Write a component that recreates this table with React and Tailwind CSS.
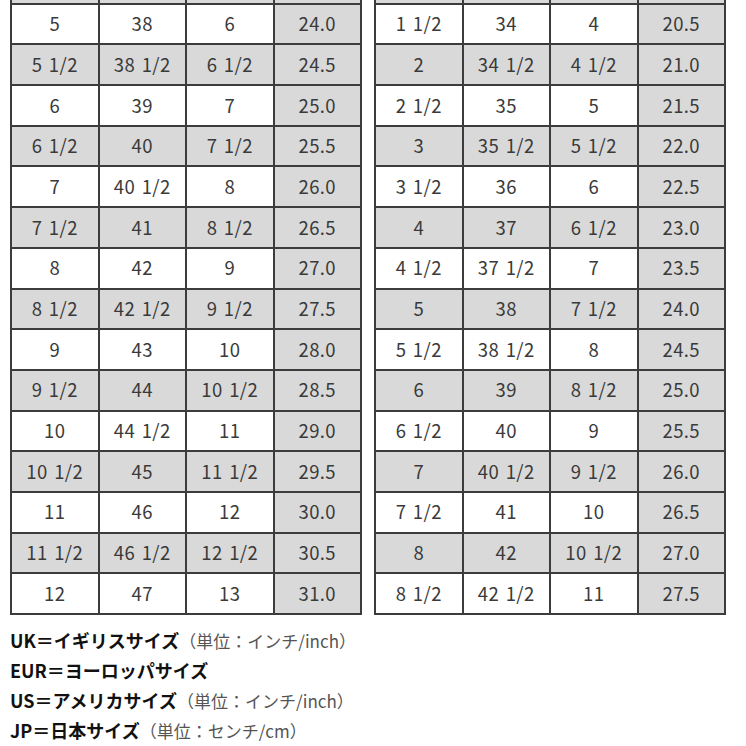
const left = [
  ["", "", "", ""],
  ["5", "38", "6", "24.0"],
  ["5 1/2", "38 1/2", "6 1/2", "24.5"],
  ["6", "39", "7", "25.0"],
  ["6 1/2", "40", "7 1/2", "25.5"],
  ["7", "40 1/2", "8", "26.0"],
  ["7 1/2", "41", "8 1/2", "26.5"],
  ["8", "42", "9", "27.0"],
  ["8 1/2", "42 1/2", "9 1/2", "27.5"],
  ["9", "43", "10", "28.0"],
  ["9 1/2", "44", "10 1/2", "28.5"],
  ["10", "44 1/2", "11", "29.0"],
  ["10 1/2", "45", "11 1/2", "29.5"],
  ["11", "46", "12", "30.0"],
  ["11 1/2", "46 1/2", "12 1/2", "30.5"],
  ["12", "47", "13", "31.0"],
];

const right = [
  ["", "", "", ""],
  ["1 1/2", "34", "4", "20.5"],
  ["2", "34 1/2", "4 1/2", "21.0"],
  ["2 1/2", "35", "5", "21.5"],
  ["3", "35 1/2", "5 1/2", "22.0"],
  ["3 1/2", "36", "6", "22.5"],
  ["4", "37", "6 1/2", "23.0"],
  ["4 1/2", "37 1/2", "7", "23.5"],
  ["5", "38", "7 1/2", "24.0"],
  ["5 1/2", "38 1/2", "8", "24.5"],
  ["6", "39", "8 1/2", "25.0"],
  ["6 1/2", "40", "9", "25.5"],
  ["7", "40 1/2", "9 1/2", "26.0"],
  ["7 1/2", "41", "10", "26.5"],
  ["8", "42", "10 1/2", "27.0"],
  ["8 1/2", "42 1/2", "11", "27.5"],
];

function SizeTable({ rows }) {
  return (
    <table className="w-[352px] table-fixed border-collapse border-2 border-[#3c3c3c]">
      <tbody>
        {rows.map((r, i) => {
          const grey = i % 2 === 0;
          return (
            <tr key={i} className="h-[40.7px]">
              {r.map((c, j) => (
                <td
                  key={j}
                  className={
                    "border-2 border-[#3c3c3c] p-0 text-center align-middle tracking-[0.4px] [word-spacing:2px] " +
                    (grey || j === 3 ? "bg-[#d9d9d9]" : "bg-white")
                  }
                >
                  {c}
                </td>
              ))}
            </tr>
          );
        })}
      </tbody>
    </table>
  );
}

function Line({ bold, rest }) {
  return (
    <div className="h-[30px] leading-[30px] whitespace-nowrap">
      <span className="font-bold text-[#111]">{bold}</span>
      {rest && <span className="text-[#555] text-[17px]">{rest}</span>}
    </div>
  );
}

export default function App() {
  return (
    <div
      className="w-[746px] h-[746px] overflow-hidden bg-white text-[#3a3a3a] text-[18.5px]"
      style={{ fontFamily: '"Noto Sans CJK JP", "Noto Sans", sans-serif' }}
    >
      <div className="-mt-[38px] pl-[10px] flex gap-[12px]">
        <SizeTable rows={left} />
        <SizeTable rows={right} />
      </div>
      <div className="pl-[10px] mt-[10px] text-[18px]">
        <Line bold="UK＝イギリスサイズ" rest="（単位：インチ/inch）" />
        <Line bold="EUR＝ヨーロッパサイズ" />
        <Line bold="US＝アメリカサイズ" rest="（単位：インチ/inch）" />
        <Line bold="JP＝日本サイズ" rest="（単位：センチ/cm）" />
      </div>
    </div>
  );
}
